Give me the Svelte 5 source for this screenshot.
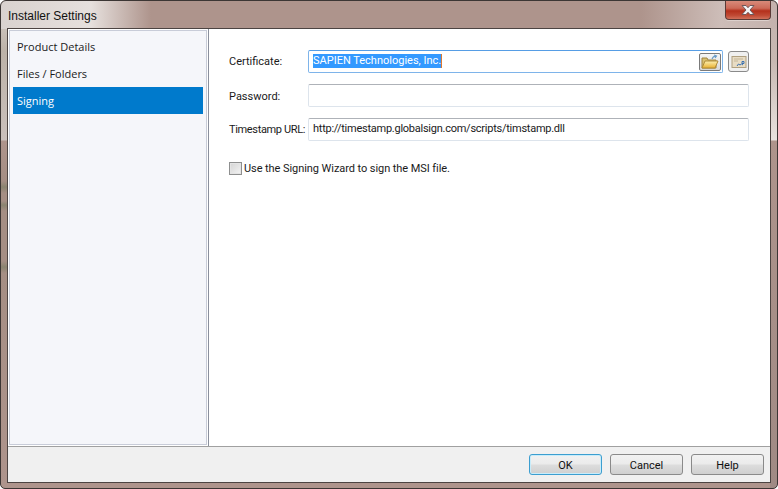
<script>
  const navItems = [
    { label: 'Product Details', active: false },
    { label: 'Files / Folders', active: false },
    { label: 'Signing', active: true }
  ];
</script>

<div class="window">
  <header class="titlebar">
    <span class="title">Installer Settings</span>
    <button class="close" aria-label="Close">
      <svg width="16" height="12" viewBox="0 0 16 12">
        <path d="M2 1.500h4l2 2.200 2-2.200h4l-4 4.500 4 4.500h-4L8 8.300 6 10.500H2L6 6z" fill="#f4f4f6" stroke="#70585a" stroke-width="1"/>
      </svg>
    </button>
  </header>
  <div class="client">
    <div class="body">
      <aside class="sidebar">
        <nav class="nav-list">
          {#each navItems as item}
            <div class="nav-item" class:active={item.active}>{item.label}</div>
          {/each}
        </nav>
      </aside>
      <main class="panel">
        <div class="row">
          <span class="label">Certificate:</span>
          <div class="field focused">
            <span class="selected">SAPIEN Technologies, Inc.</span>
            <span class="browse">
              <svg width="20" height="16" viewBox="0 0 20 16">
                <defs>
                  <linearGradient id="folder" x1="0" y1="0" x2="0" y2="1">
                    <stop offset="0" stop-color="#fdf0b0"/>
                    <stop offset="1" stop-color="#e8b030"/>
                  </linearGradient>
                </defs>
                <path d="M2 4h5l1 2h8v8H2z" fill="#d8c070" stroke="#a08440"/>
                <path d="M2 14l3-7h13l-3 7z" fill="url(#folder)" stroke="#b08c38"/>
                <path d="M12 5q1-3 4-3M14 1l2.500 1-1.500 2" fill="none" stroke="#6a9cc8" stroke-width="1.200"/>
              </svg>
            </span>
          </div>
          <span class="cert-btn">
            <svg width="16" height="14" viewBox="0 0 16 14">
              <rect x="1" y="1.500" width="14" height="11" fill="#e8dcc4" stroke="#b0a080"/>
              <path d="M3 4h9M3 6h4" stroke="#c4b698"/>
              <path d="M6 11l1.500-2 1.500 1 1.500-1 1.500 1M11 6.500h2v2h-2z" fill="none" stroke="#3a70b0"/>
            </svg>
          </span>
        </div>
        <div class="row">
          <span class="label low">Password:</span>
          <div class="field"></div>
        </div>
        <div class="row">
          <span class="label tight">Timestamp URL:</span>
          <div class="field"><span class="value">http://timestamp.globalsign.com/scripts/timstamp.dll</span></div>
        </div>
        <label class="check">
          <span class="box"></span>
          <span class="check-text">Use the Signing Wizard to sign the MSI file.</span>
        </label>
      </main>
    </div>
    <footer class="footer">
      <button class="btn default">OK</button>
      <button class="btn">Cancel</button>
      <button class="btn">Help</button>
    </footer>
  </div>
</div>

<style>
  :global(body) {
    margin: 0;
    background: #fff;
  }
  .window {
    width: 778px;
    height: 489px;
    box-sizing: border-box;
    border: 1px solid #3c3634;
    border-radius: 6px 6px 5px 5px;
    background-color: #ae948c;
    background-image:
      linear-gradient(90deg, #d9d2cf 0, #e6e0dd 90px, #ae948c 150px, #ae948c 640px, #cdbdb8 720px, #c4b2ad 100%),
      linear-gradient(#d8d0cc 0, #bcb2a8 50px, #cac0bc 139px, #ae948c 140px, #a58e84 180px, #8a8470 186px, #a58e84 192px, #a58e84 200px, #8a8470 204px, #a58e84 210px, #a58e84 260px, #8a8470 266px, #a58e84 272px, #ae948c 100%),
      linear-gradient(#c4b2ad 0, #c8b8b2 60px, #e8e2de 139px, #ae948c 140px, #a08a84 100%);
    background-size: 100% 28px, 7px 100%, 7px 100%;
    background-position: 0 0, 0 0, 100% 0;
    background-repeat: no-repeat;
    display: flex;
    flex-direction: column;
    padding: 0 6px 5px;
    font: 11px Roboto, "Liberation Sans", Arial, sans-serif;
    color: #1a1a1a;
    overflow: hidden;
  }
  .titlebar {
    height: 27px;
    flex: none;
    display: flex;
    align-items: center;
    justify-content: space-between;
  }
  .title {
    font: 12px "Liberation Sans", Arial, sans-serif;
    color: #111;
    margin: 3px 0 0 1px;
  }
  .close {
    width: 46px;
    height: 19px;
    margin: -8px 0 0;
    padding: 0;
    border: 1px solid #5a3a36;
    border-top: 0;
    border-radius: 0 0 4px 4px;
    background: linear-gradient(#d88a7a 0, #cc6a58 40%, #b4301c 55%, #c04a34 80%, #d0705a 100%);
    box-shadow: 0 1px 0 #dcd0cc;
    display: flex;
    align-items: center;
    justify-content: center;
  }
  .client {
    flex: 1;
    min-height: 0;
    border: 1px solid #4c4442;
    background: #f0f0f0;
    display: flex;
    flex-direction: column;
  }
  .body {
    flex: 1;
    min-height: 0;
    display: flex;
    background: #fff;
    border-bottom: 1px solid #a0a0a0;
  }
  .sidebar {
    width: 201px;
    box-sizing: border-box;
    flex: none;
    background: #fff;
    border-right: 1px solid #8a8f9c;
    padding: 1px;
    display: flex;
  }
  .nav-list {
    flex: 1;
    background: #f5f6fa;
    border: 1px solid #c8ccd8;
    padding: 2px 3px;
    display: flex;
    flex-direction: column;
  }
  .nav-item {
    height: 27px;
    line-height: 27px;
    padding-left: 4px;
    font-family: "Open Sans", sans-serif;
    font-size: 11px;
  }
  .nav-item.active {
    background: #007acc;
    color: #fff;
  }
  .panel {
    flex: 1;
    padding: 21px 21px 0 20px;
    display: flex;
    flex-direction: column;
  }
  .row {
    display: flex;
    align-items: center;
    height: 23px;
    margin-bottom: 11px;
  }
  .label {
    width: 79px;
    flex: none;
    white-space: nowrap;
  }
  .label.low {
    padding-top: 2px;
  }
  .label.tight {
    letter-spacing: -0.35px;
  }
  .field {
    flex: 1;
    height: 23px;
    box-sizing: border-box;
    border: 1px solid #dde4ec;
    border-top-color: #aeb2b8;
    border-radius: 2px;
    background: #fff;
    display: flex;
    align-items: center;
    padding-left: 4px;
    position: relative;
  }
  .field.focused {
    border-color: #7eb4ea;
    border-top-color: #569de5;
  }
  .selected {
    background: #3399ff;
    color: #fff;
    line-height: 14px;
    margin-top: -2px;
    border-right: 1px solid #e07a30;
  }
  .value {
    letter-spacing: -0.25px;
    margin-top: -2px;
  }
  .browse {
    position: absolute;
    right: 1px;
    top: 2px;
    width: 22px;
    height: 18px;
    border: 1px solid #7a7a7a;
    border-radius: 2px;
    box-sizing: border-box;
    background: linear-gradient(#f6f6f6, #d8d8d8);
    display: flex;
    align-items: center;
    justify-content: center;
  }
  .cert-btn {
    width: 21px;
    height: 21px;
    margin-left: 5px;
    border: 1px solid #8a8a8a;
    border-radius: 3px;
    box-sizing: border-box;
    background: #f0f0f0;
    display: flex;
    align-items: center;
    justify-content: center;
  }
  .check {
    display: flex;
    align-items: center;
    gap: 2px;
    margin-top: 9px;
  }
  .check-text {
    letter-spacing: -0.07px;
    padding-top: 1px;
  }
  .box {
    width: 13px;
    height: 13px;
    box-sizing: border-box;
    border: 1px solid #8e8f8f;
    background: linear-gradient(135deg, #d4d4d4, #f4f4f4);
    outline: 1px solid #e4e4e4;
    outline-offset: -2px;
  }
  .footer {
    height: 35px;
    box-sizing: border-box;
    flex: none;
    display: flex;
    justify-content: flex-end;
    align-items: flex-start;
    gap: 8px;
    padding: 7px 6px 0 0;
  }
  .btn {
    width: 73px;
    height: 21px;
    padding: 2px 0 0;
    border: 1px solid #8a8a8a;
    border-radius: 3px;
    background: linear-gradient(#f2f2f2 0, #ebebeb 48%, #dddddd 52%, #cfcfcf 100%);
    font: 11px Roboto, "Liberation Sans", Arial, sans-serif;
    color: #111;
  }
  .btn.default {
    border-color: #3c9ed0;
    box-shadow: inset 0 0 0 1px #c8ecfa;
  }
</style>
